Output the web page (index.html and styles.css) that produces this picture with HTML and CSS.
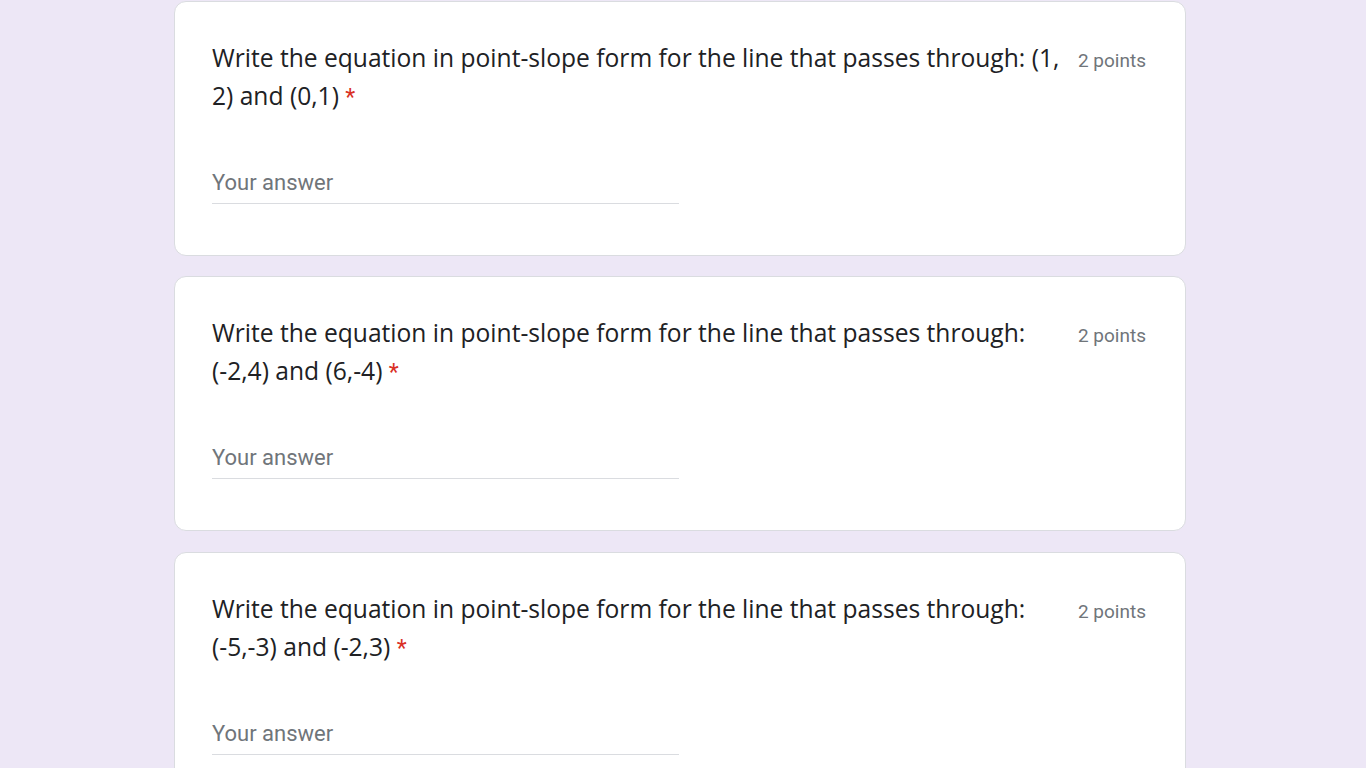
FILE: index.html
```html
<!DOCTYPE html>
<html>
<head>
<meta charset="utf-8">
<link rel="stylesheet" href="styles.css">
</head>
<body>
<div class="form">
  <div class="card">
    <div class="header">
      <div class="title">Write the equation in point-slope form for the line that passes through: (1, 2) and (0,1) <span class="req">*</span></div>
      <div class="points">2 points</div>
    </div>
    <div class="answer"><span class="placeholder">Your answer</span></div>
  </div>
  <div class="card">
    <div class="header">
      <div class="title">Write the equation in point-slope form for the line that passes through: (-2,4) and (6,-4) <span class="req">*</span></div>
      <div class="points">2 points</div>
    </div>
    <div class="answer"><span class="placeholder">Your answer</span></div>
  </div>
  <div class="card">
    <div class="header">
      <div class="title">Write the equation in point-slope form for the line that passes through: (-5,-3) and (-2,3) <span class="req">*</span></div>
      <div class="points">2 points</div>
    </div>
    <div class="answer"><span class="placeholder">Your answer</span></div>
  </div>
</div>
</body>
</html>
```
FILE: styles.css
```css
html, body {
  margin: 0;
  padding: 0;
  background: #ede7f6;
  overflow: hidden;
  height: 768px;
}
.form {
  width: 1012px;
  margin-left: 174px;
  padding-top: 0.5px;
  display: flex;
  flex-direction: column;
  gap: 20.5px;
}
.card {
  background: #ffffff;
  border: 1px solid #dadce0;
  border-radius: 12px;
  padding: 37px 39px 51px 37px;
  height: 255px;
  box-sizing: border-box;
  flex-shrink: 0;
}
.header {
  display: flex;
  align-items: flex-start;
  gap: 18px;
}
.title {
  flex: 1;
  font-family: "Open Sans", sans-serif;
  font-size: 24.6px;
  line-height: 38px;
  color: #202124;
}
.req {
  color: #d93025;
  font-family: Roboto, sans-serif;
  font-size: 23px;
  line-height: 1;
}
.points {
  font-family: Roboto, sans-serif;
  font-size: 19px;
  line-height: 24px;
  color: #70757a;
  padding-top: 10px;
  white-space: nowrap;
}
.answer {
  width: 467px;
  margin-top: 40px;
  padding-top: 15px;
  padding-bottom: 7px;
  border-bottom: 1px solid #dadce0;
}
.placeholder {
  display: block;
  font-family: Roboto, sans-serif;
  font-size: 22px;
  line-height: 26px;
  color: #70757a;
}
```
